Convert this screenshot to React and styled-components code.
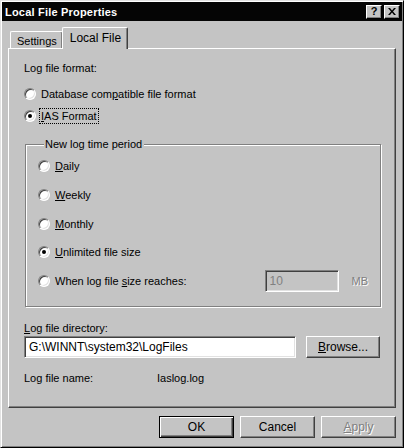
import React from "react";
import styled, { createGlobalStyle } from "styled-components";

const GREY = "#c4c4c4";
const DARK = "#404040";
const SHADOW = "#808080";
const LIGHT = "#e2e2e2";

const Global = createGlobalStyle`
  html, body { margin: 0; padding: 0; background: ${GREY}; }
  body { font-family: "Liberation Sans", Arial, sans-serif; font-size: 11px; color: #000; }
  * { box-sizing: border-box; }
`;

const Window = styled.div`
  width: 404px;
  height: 448px;
  background: ${GREY};
  border: 1px solid;
  border-color: ${LIGHT} #000 #000 ${LIGHT};
  box-shadow: inset 1px 1px #fff, inset -1px -1px ${SHADOW};
  padding: 1px;
  display: flex;
  flex-direction: column;
`;

const TitleBar = styled.div`
  height: 19px;
  background: #050505;
  color: #fff;
  display: flex;
  align-items: center;
  padding: 0 2px 0 3px;
  font-weight: bold;
  font-size: 11px;
`;

const TitleText = styled.span`
  flex: 1;
  letter-spacing: 0.2px;
`;

const CaptionButton = styled.div`
  width: 16px;
  height: 14px;
  margin-left: ${(p) => (p.$gap ? "2px" : "0")};
  background: ${GREY};
  border: 1px solid;
  border-color: #fff #000 #000 #fff;
  box-shadow: inset -1px -1px ${SHADOW};
  display: flex;
  align-items: center;
  justify-content: center;
  color: #000;
  font-size: 11px;
  font-weight: bold;
  line-height: 1;
`;

const TabStrip = styled.div`
  display: flex;
  align-items: flex-end;
  height: 21px;
  margin-top: 6px;
  padding-left: 8px;
  position: relative;
  z-index: 1;
`;

const Tab = styled.div`
  height: ${(p) => (p.$active ? "22px" : "17px")};
  margin-bottom: ${(p) => (p.$active ? "-1px" : "0")};
  margin-left: ${(p) => (p.$active ? "-1px" : "0")};
  padding: ${(p) => (p.$active ? "3px 6px 0 7px" : "2px 5px 0 6px")};
  background: ${GREY};
  border-top: 1px solid #fff;
  border-left: 1px solid #fff;
  border-right: 1px solid ${DARK};
  box-shadow: inset -1px 0 ${SHADOW};
  border-radius: 2px 2px 0 0;
  font-size: ${(p) => (p.$active ? "12px" : "11px")};
  line-height: 14px;
`;

const Panel = styled.div`
  height: 360px;
  margin: 0 6px;
  border: 1px solid;
  border-color: #fff ${DARK} ${DARK} #fff;
  box-shadow: inset -1px -1px ${SHADOW};
  display: flex;
  flex-direction: column;
  padding: 12px 0 0 15px;
`;

const Line = styled.div`
  display: flex;
  align-items: center;
  height: ${(p) => p.$h || 14}px;
  margin-top: ${(p) => p.$top || 0}px;
  padding-right: ${(p) => p.$right || 0}px;
`;

const RadioCircle = styled.span`
  width: 12px;
  height: 12px;
  flex: none;
  border-radius: 50%;
  border: 1px solid;
  border-color: ${SHADOW} #fff #fff ${SHADOW};
  background: #fff;
  box-shadow: inset 1px 1px ${DARK}, inset -1px -1px ${LIGHT};
  display: flex;
  align-items: center;
  justify-content: center;
  margin-right: 5px;
  &::after {
    content: "";
    width: 4px;
    height: 4px;
    border-radius: 50%;
    background: #000;
    display: ${(p) => (p.$on ? "block" : "none")};
  }
`;

const Key = styled.span`
  text-decoration: underline;
`;

const Focus = styled.span`
  outline: 1px dotted #000;
  outline-offset: 1px;
`;

const Radio = ({ on, children, top, h }) => (
  <Line $top={top} $h={h || 16}>
    <RadioCircle $on={on} />
    <span>{children}</span>
  </Line>
);

const Group = styled.fieldset`
  margin: 13px 0 0 1px;
  width: 356px;
  padding: 0 0 14px 12px;
  border: 1px solid ${SHADOW};
  box-shadow: inset 1px 1px #fff, 1px 1px #fff;
  min-width: 0;
`;

const Legend = styled.legend`
  margin-left: 6px;
  padding: 0 2px 0 1px;
  line-height: 14px;
  background: ${GREY};
`;

const Grow = styled.span`
  flex: 1;
`;

const Field = styled.div`
  width: ${(p) => p.$w}px;
  height: 22px;
  flex: none;
  border: 1px solid;
  border-color: ${SHADOW} #fff #fff ${SHADOW};
  box-shadow: inset 1px 1px ${DARK}, inset -1px -1px ${LIGHT};
  background: ${(p) => (p.$disabled ? GREY : "#fff")};
  color: ${(p) => (p.$disabled ? SHADOW : "#000")};
  display: flex;
  align-items: center;
  padding-left: 4px;
  font-size: 12px;
`;

const Dim = styled.span`
  color: ${SHADOW};
  text-shadow: 1px 1px #fff;
  margin-left: ${(p) => p.$left || 0}px;
`;

const Button = styled.div`
  width: ${(p) => p.$w || 75}px;
  height: 22px;
  flex: none;
  margin-left: ${(p) => p.$left || 0}px;
  background: ${GREY};
  border: 1px solid;
  border-color: ${(p) => (p.$default ? "#000" : `#fff ${DARK} ${DARK} #fff`)};
  box-shadow: ${(p) =>
    p.$default
      ? `inset 1px 1px #fff, inset -1px -1px ${DARK}, inset -2px -2px ${SHADOW}`
      : `inset -1px -1px ${SHADOW}`};
  display: flex;
  align-items: center;
  justify-content: center;
  font-size: 12px;
  color: ${(p) => (p.$disabled ? SHADOW : "#000")};
  text-shadow: ${(p) => (p.$disabled ? "1px 1px #fff" : "none")};
`;

const NameLabel = styled.span`
  width: 133px;
`;

const ButtonRow = styled.div`
  display: flex;
  justify-content: flex-end;
  margin-top: 8px;
  padding-right: 6px;
  gap: 6px;
`;

export default function App() {
  return (
    <>
      <Global />
      <Window>
        <TitleBar>
          <TitleText>Local File Properties</TitleText>
          <CaptionButton>?</CaptionButton>
          <CaptionButton $gap>
            <svg width="8" height="7" viewBox="0 0 8 7">
              <path d="M0 0h2l2 2.5L6 0h2L5 3.5 8 7H6L4 4.5 2 7H0l3-3.5z" fill="#000" />
            </svg>
          </CaptionButton>
        </TitleBar>

        <TabStrip>
          <Tab>Settings</Tab>
          <Tab $active>Local File</Tab>
        </TabStrip>

        <Panel>
          <Line>Log file format:</Line>
          <Radio top={11}>
            Database com<Key>p</Key>atible file format
          </Radio>
          <Radio top={6} on>
            <Focus>
              <Key>I</Key>AS Format
            </Focus>
          </Radio>

          <Group>
            <Legend>New log time period</Legend>
            <Radio top={7}>
              <Key>D</Key>aily
            </Radio>
            <Radio top={13}>
              <Key>W</Key>eekly
            </Radio>
            <Radio top={13}>
              <Key>M</Key>onthly
            </Radio>
            <Radio top={12} on>
              <Key>U</Key>nlimited file size
            </Radio>
            <Line $top={10} $h={22} $right={12}>
              <RadioCircle />
              <Grow>
                When log file <Key>s</Key>ize reaches:
              </Grow>
              <Field $w={74} $disabled>
                10
              </Field>
              <Dim $left={13}>MB</Dim>
            </Line>
          </Group>

          <Line $top={14}>
            <span>
              <Key>L</Key>og file directory:
            </span>
          </Line>
          <Line $top={1} $h={22}>
            <Field $w={272}>G:\WINNT\system32\LogFiles</Field>
            <Button $w={74} $left={10}>
              <span>
                <Key>B</Key>rowse...
              </span>
            </Button>
          </Line>
          <Line $top={13}>
            <NameLabel>Log file name:</NameLabel>
            <span>Iaslog.log</span>
          </Line>
        </Panel>

        <ButtonRow>
          <Button $default>OK</Button>
          <Button>Cancel</Button>
          <Button $disabled>
            <span>
              <Key>A</Key>pply
            </span>
          </Button>
        </ButtonRow>
      </Window>
    </>
  );
}
